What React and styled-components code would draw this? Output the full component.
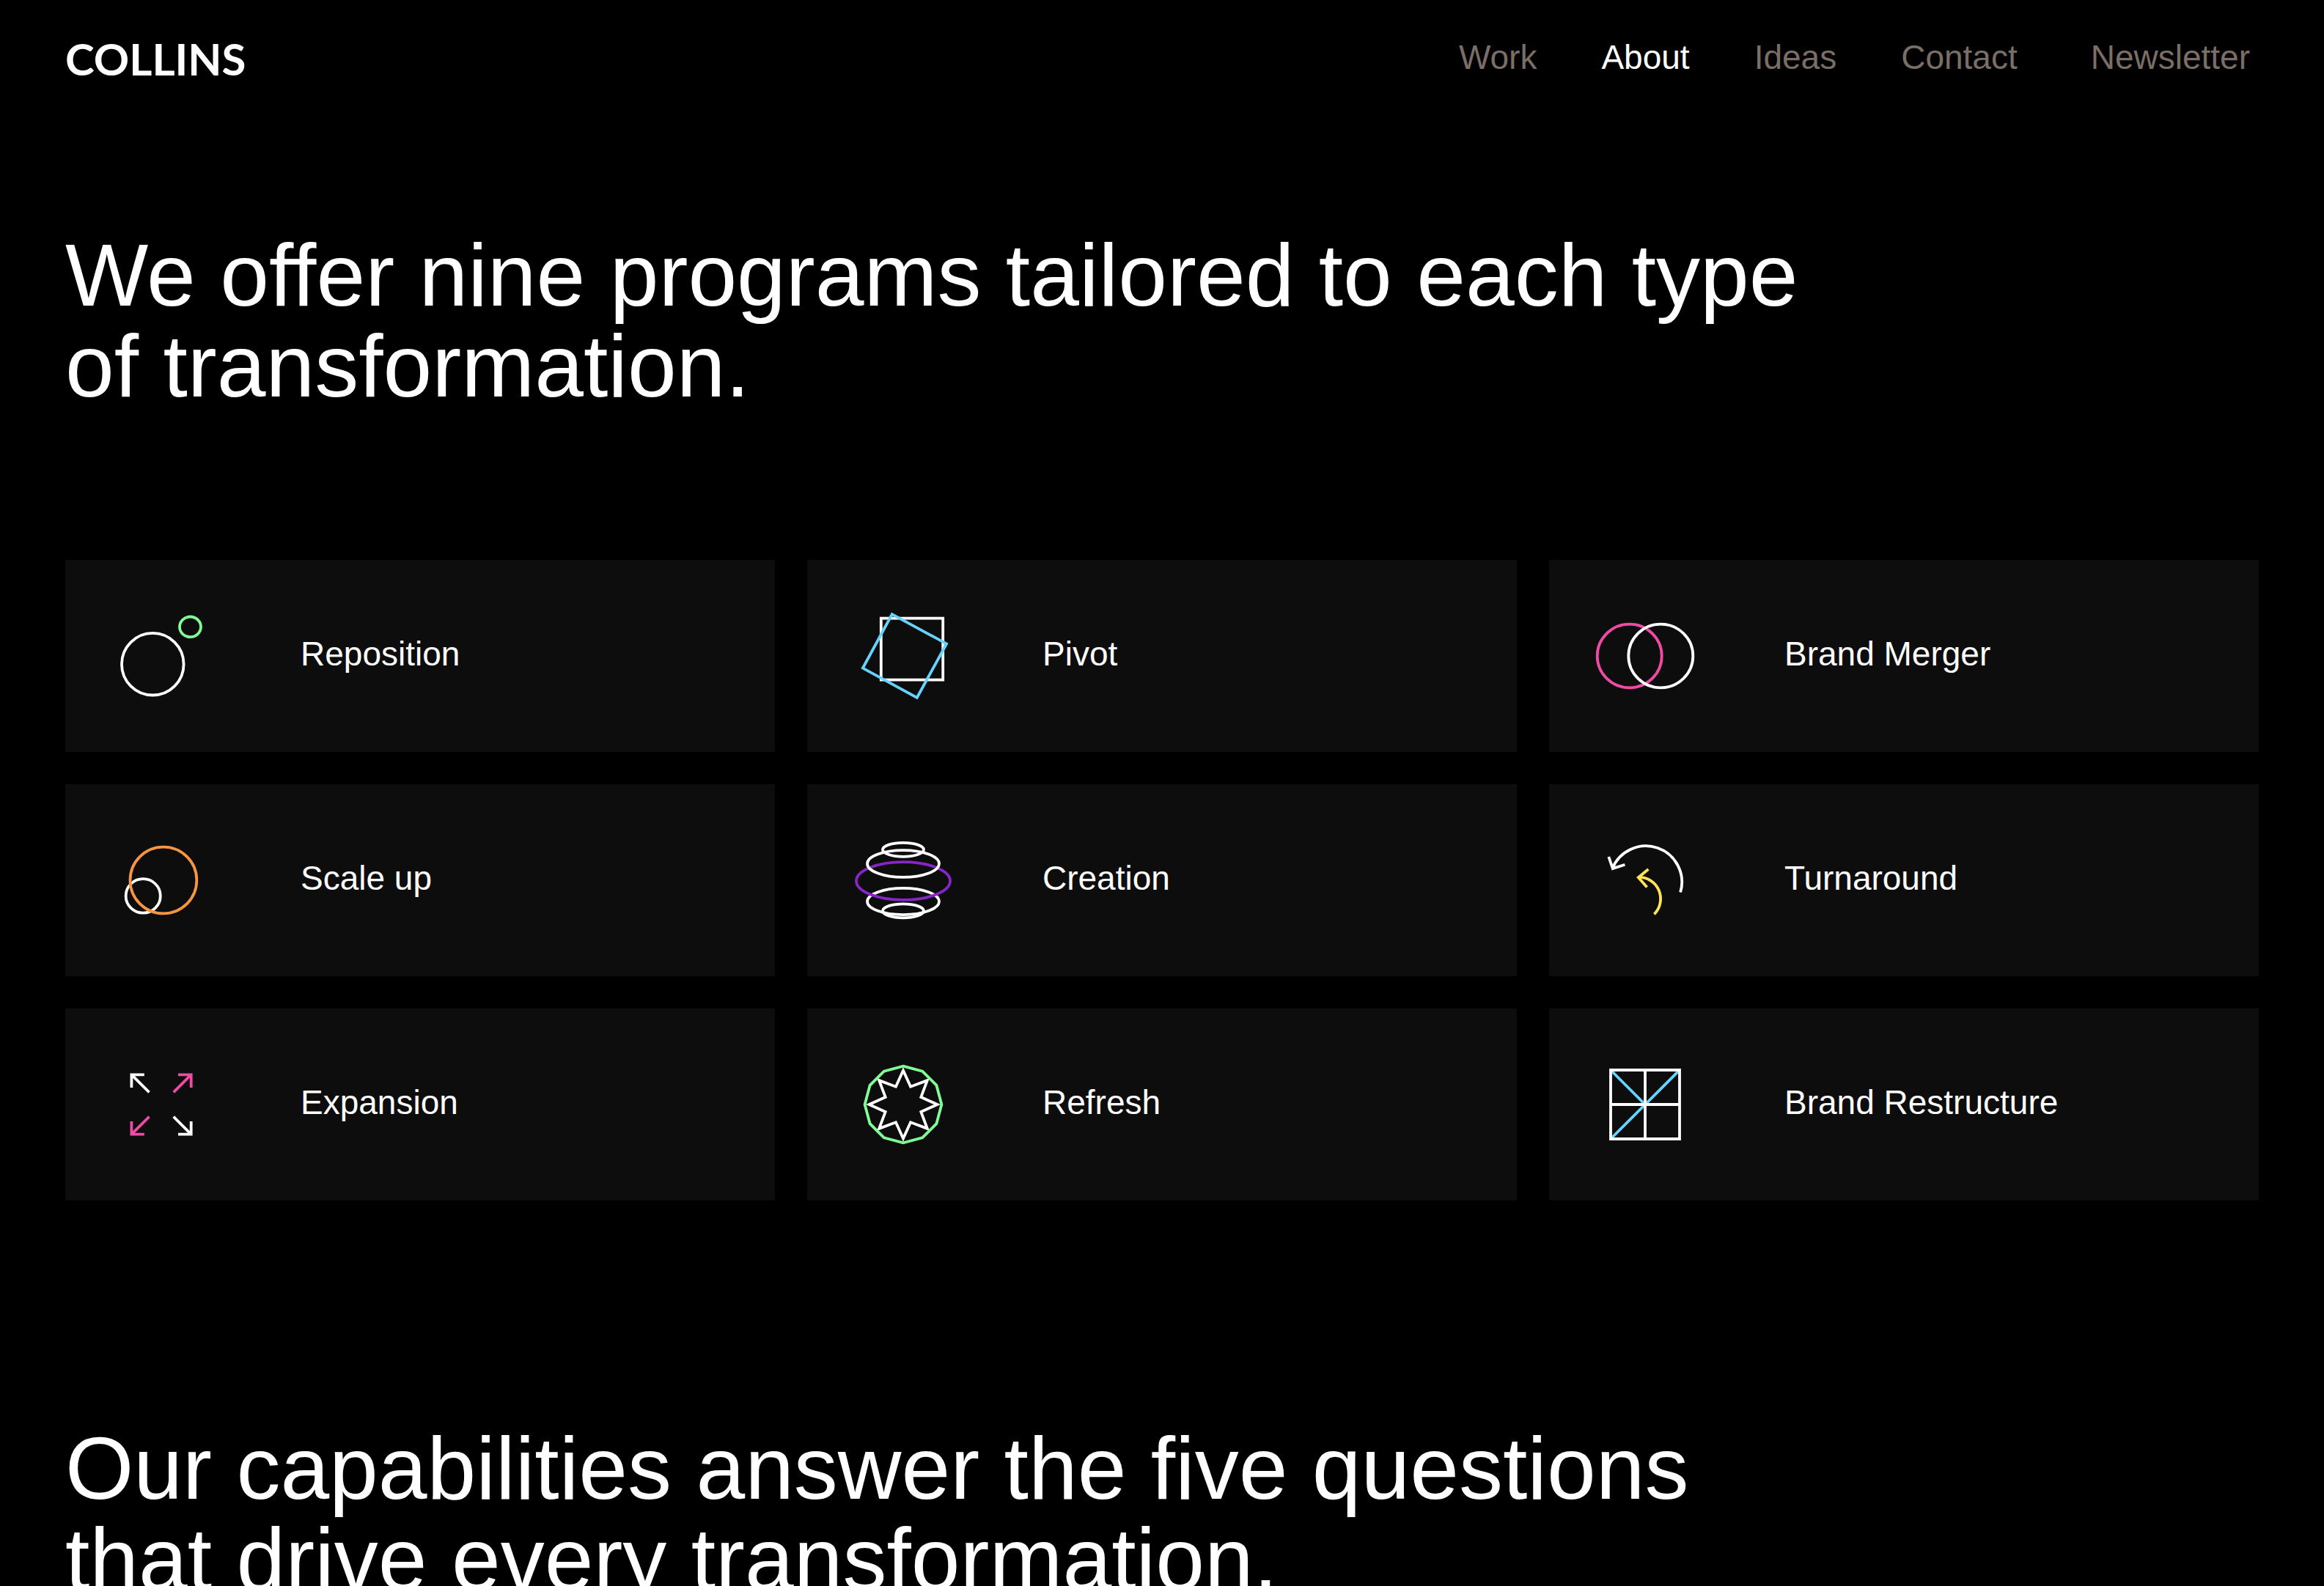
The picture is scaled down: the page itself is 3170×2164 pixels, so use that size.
import React from "react";
import styled, { createGlobalStyle } from "styled-components";

const GlobalStyle = createGlobalStyle`
  *, *::before, *::after { box-sizing: border-box; }
  body {
    margin: 0;
    background: #000;
    color: #fff;
    font-family: "Liberation Sans", Arial, sans-serif;
  }
`;

const Page = styled.div`
  min-height: 100vh;
  padding: 0 89px;
`;

const Header = styled.header`
  display: flex;
  align-items: center;
  justify-content: space-between;
  padding: 50px 0;
`;

const Logo = styled.a`
  padding-top: 4px;
  color: #fff;
  font: 700 60px/52px Lato, sans-serif;
  text-decoration: none;
`;

const Nav = styled.nav`
  display: flex;
  gap: 88px;
`;

const NavLink = styled.a`
  color: ${(p) => (p.$active ? "#fff" : "#7a6e66")};
  font-size: 46px;
  line-height: 56px;
  text-decoration: none;
`;

const NavButton = styled.button`
  padding: 0 12px;
  border: 0;
  background: none;
  color: #7a6e66;
  font-family: inherit;
  font-size: 46px;
  line-height: 56px;
  cursor: pointer;
`;

const Programs = styled.section`
  padding: 157px 0 303px;
`;

const Heading = styled.h2`
  max-width: 80%;
  margin: 0;
  font-size: 120px;
  font-weight: 400;
  line-height: 124px;
`;

const Grid = styled.ul`
  display: grid;
  grid-template-columns: repeat(3, 1fr);
  gap: 44px;
  margin: 203px 0 0;
  padding: 0;
  list-style: none;
`;

const Card = styled.li`
  display: flex;
  align-items: center;
  background: #0d0d0d;
`;

const Icon = styled.svg`
  display: block;
  flex: none;
  width: 262px;
  height: 262px;
  fill: none;
  stroke: #fff;
  stroke-width: 3.8;
`;

const Label = styled.span`
  padding: 0 0 6px 59px;
  font-size: 46px;
  line-height: 56px;
`;

const GREEN = "#80ff94";
const BLUE = "#66d4ff";
const PINK = "#f04aa4";
const ORANGE = "#f79540";
const PURPLE = "#8626c6";
const YELLOW = "#ffe553";

const ring = (count, radius, innerRadius = radius) =>
  Array.from({ length: count }, (_, i) => {
    const angle = (i * 2 * Math.PI) / count;
    const r = i % 2 ? innerRadius : radius;
    return `${131 + r * Math.sin(angle)},${131 - r * Math.cos(angle)}`;
  }).join(" ");

const programs = [
  {
    name: "Reposition",
    art: (
      <>
        <circle cx="119.3" cy="142.2" r="42.3" />
        <ellipse cx="170.5" cy="91.3" rx="14.5" ry="13.8" stroke={GREEN} />
      </>
    ),
  },
  {
    name: "Pivot",
    art: (
      <>
        <rect x="100.8" y="79.6" width="84.4" height="84" />
        <path d="M115.8 74.1 190.1 114.4 149.8 187.9 75.9 147.6Z" stroke={BLUE} />
      </>
    ),
  },
  {
    name: "Brand Merger",
    art: (
      <>
        <ellipse cx="109.7" cy="131" rx="44" ry="43.3" stroke={PINK} />
        <ellipse cx="152.3" cy="131" rx="44" ry="43.3" />
      </>
    ),
  },
  {
    name: "Scale up",
    art: (
      <>
        <ellipse cx="106.2" cy="152.4" rx="23.6" ry="23.2" />
        <circle cx="133.9" cy="131" r="45.4" stroke={ORANGE} />
      </>
    ),
  },
  {
    name: "Creation",
    art: (
      <>
        <ellipse cx="131" cy="160" rx="49" ry="18.1" />
        <ellipse cx="131" cy="172.8" rx="28" ry="9.5" />
        <ellipse cx="131" cy="132" rx="64" ry="25.8" stroke={PURPLE} />
        <ellipse cx="131" cy="108.5" rx="49" ry="18.4" />
        <ellipse cx="131" cy="89.3" rx="28" ry="9.5" />
      </>
    ),
  },
  {
    name: "Turnaround",
    art: (
      <>
        <path d="M179.1 147.5A49.2 49.2 0 0 0 86.3 115.1M81.3 99 86.8 115 103.4 109.7" />
        <path
          d="M143.4 177.3A29.5 29.5 0 0 0 122 126.9M135.4 116 121.8 127.2 133.5 140.5"
          stroke={YELLOW}
        />
      </>
    ),
  },
  {
    name: "Expansion",
    art: (
      <>
        <path d="M90.4 108V90.3H107.8M90.4 90.3 114.5 114.3" />
        <path d="M154 171.7H171.7V154M171.7 171.7 147.7 147.7" />
        <path
          d="M154 90.3H171.7V108M171.7 90.3 147.7 114.3M90.4 154V171.7H107.8M90.4 171.7 114.5 147.7"
          stroke={PINK}
        />
      </>
    ),
  },
  {
    name: "Refresh",
    art: (
      <>
        <polygon points={ring(16, 46.5, 26.3)} />
        <polygon points={ring(12, 52.4)} stroke={GREEN} />
      </>
    ),
  },
  {
    name: "Brand Restructure",
    art: (
      <>
        <path d="M84 84 131 131 178 84M131 131 84 178" stroke={BLUE} />
        <path d="M84 84H178V178H84ZM131 84V178M84 131H178" />
      </>
    ),
  },
];

export default function App() {
  return (
    <>
      <GlobalStyle />
      <Page>
        <Header>
          <Logo href="#home">COLLINS</Logo>
          <Nav>
            <NavLink href="#work">Work</NavLink>
            <NavLink href="#about" $active aria-current="page">
              About
            </NavLink>
            <NavLink href="#ideas">Ideas</NavLink>
            <NavLink href="#contact">Contact</NavLink>
            <NavButton type="button">Newsletter</NavButton>
          </Nav>
        </Header>
        <main>
          <Programs>
            <Heading>We offer nine programs tailored to each type of transformation.</Heading>
            <Grid>
              {programs.map(({ name, art }) => (
                <Card key={name}>
                  <Icon viewBox="0 0 262 262" aria-hidden="true">
                    {art}
                  </Icon>
                  <Label>{name}</Label>
                </Card>
              ))}
            </Grid>
          </Programs>
          <Heading>Our capabilities answer the five questions that drive every transformation.</Heading>
        </main>
      </Page>
    </>
  );
}
